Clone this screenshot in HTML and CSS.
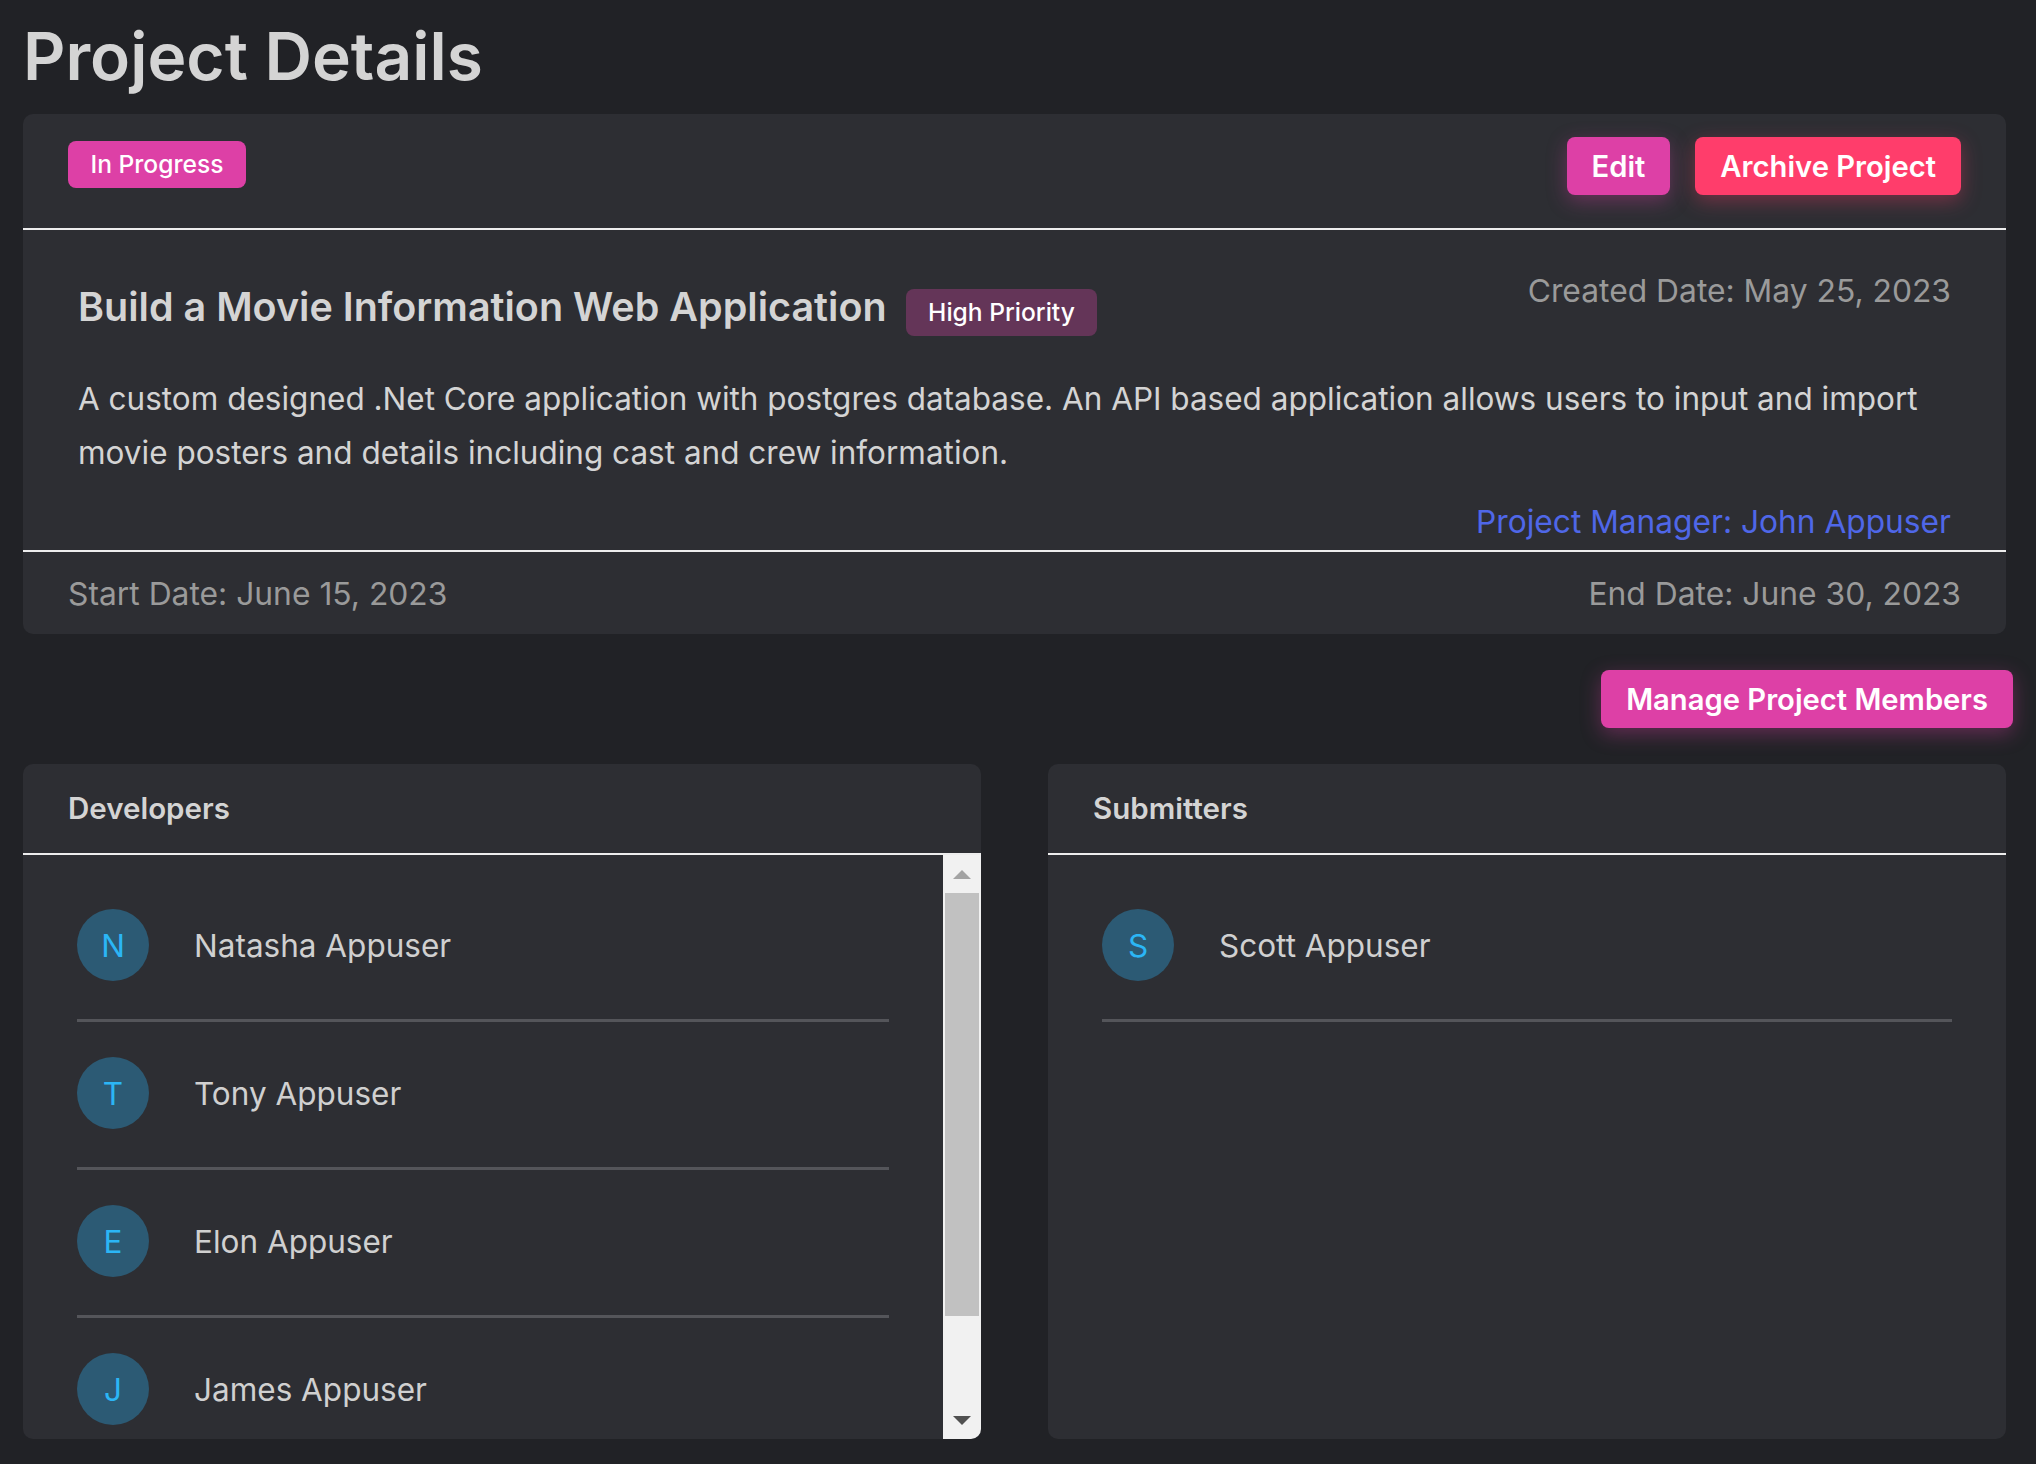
FILE: index.html
```html
<!DOCTYPE html>
<html lang="en">
<head>
  <meta charset="UTF-8">
  <meta name="viewport" content="width=device-width, initial-scale=1.0">
  <title>Project Details</title>
  <link rel="stylesheet" href="styles.css">
</head>
<body>
  <h1 class="page-title">Project Details</h1>

  <section class="card project-card">
    <div class="project-head">
      <span class="badge badge-status">In Progress</span>
      <div class="head-actions">
        <button class="btn btn-pink" type="button">Edit</button>
        <button class="btn btn-red" type="button">Archive Project</button>
      </div>
    </div>
    <div class="project-body">
      <div class="title-row">
        <div class="title-left">
          <h2 class="project-name">Build a Movie Information Web Application</h2>
          <span class="badge badge-priority">High Priority</span>
        </div>
        <span class="muted">Created Date: May 25, 2023</span>
      </div>
      <p class="description">A custom designed .Net Core application with postgres database. An API based application allows users to input and import movie posters and details including cast and crew information.</p>
      <div class="manager">Project Manager: John Appuser</div>
    </div>
    <div class="project-foot muted">
      <span>Start Date: June 15, 2023</span>
      <span>End Date: June 30, 2023</span>
    </div>
  </section>

  <div class="members-bar">
    <button class="btn btn-pink" type="button">Manage Project Members</button>
  </div>

  <div class="member-grid">
    <section class="card member-card">
      <h3 class="member-head">Developers</h3>
      <div class="member-scroll">
        <ul class="member-list">
          <li class="member"><span class="avatar">N</span><span class="member-name">Natasha Appuser</span></li>
          <li class="member"><span class="avatar">T</span><span class="member-name">Tony Appuser</span></li>
          <li class="member"><span class="avatar">E</span><span class="member-name">Elon Appuser</span></li>
          <li class="member"><span class="avatar">J</span><span class="member-name">James Appuser</span></li>
        </ul>
        <div class="scrollbar">
          <span class="scroll-btn"><i class="arrow-up"></i></span>
          <div class="scroll-track"><div class="scroll-thumb"></div></div>
          <span class="scroll-btn"><i class="arrow-down"></i></span>
        </div>
      </div>
    </section>
    <section class="card member-card">
      <h3 class="member-head">Submitters</h3>
      <div class="member-scroll">
        <ul class="member-list">
          <li class="member"><span class="avatar">S</span><span class="member-name">Scott Appuser</span></li>
        </ul>
      </div>
    </section>
  </div>
</body>
</html>
```

FILE: styles.css
```css
* {
  box-sizing: border-box;
}
body {
  margin: 0;
  padding: 0 23px 25px 23px;
  background: #212226;
  color: #d4d4d4;
  font-family: Inter, "Noto Sans", sans-serif;
  font-size: 31.5px;
}
.page-title {
  margin: 0;
  height: 114px;
  padding-top: 20px;
  font-size: 65.8px;
  line-height: 72px;
  font-weight: 600;
}
.card {
  background: #2d2e33;
  border-radius: 10px;
}
.project-card {
  margin-right: 7px;
}
.project-head {
  display: flex;
  justify-content: space-between;
  align-items: flex-start;
  height: 116px;
  padding: 23px 45px 0;
  border-bottom: 2px solid #ededed;
}
.badge {
  display: inline-block;
  height: 47px;
  padding: 0 22.5px;
  border-radius: 8px;
  color: #fff;
  font-size: 24.6px;
  font-weight: 500;
  line-height: 47px;
  white-space: nowrap;
}
.badge-status {
  margin-top: 4px;
  background: #dd40a6;
}
.badge-priority {
  margin-top: 18px;
  background: #643558;
}
.head-actions {
  display: flex;
  gap: 25px;
}
.btn {
  height: 58px;
  padding: 0 25px;
  border: none;
  border-radius: 8px;
  color: #fff;
  font-family: inherit;
  font-size: 29.2px;
  font-weight: 600;
}
.btn-pink {
  background: #dd40a6;
  box-shadow: 0 6px 20px rgba(221, 64, 166, 0.35);
}
.btn-red {
  background: #ff3d6b;
  box-shadow: 0 6px 20px rgba(255, 61, 107, 0.35);
}
.project-body {
  height: 322px;
  padding: 41px 55px 0;
  border-bottom: 2px solid #ededed;
}
.title-row {
  display: flex;
  justify-content: space-between;
  align-items: flex-start;
}
.title-left {
  display: flex;
  align-items: flex-start;
  gap: 19px;
}
.project-name {
  margin: 8px 0 0;
  font-size: 39.5px;
  line-height: 56px;
  font-weight: 600;
}
.muted {
  color: #9a9a9a;
  font-size: 31.8px;
}
.description {
  margin: 36px 0 0;
  line-height: 53.5px;
}
.manager {
  margin-top: 18px;
  color: #4f67e8;
  font-size: 31.7px;
  text-align: right;
  line-height: 50px;
}
.project-foot {
  display: flex;
  justify-content: space-between;
  align-items: center;
  height: 82px;
  padding: 0 45px;
}
.members-bar {
  display: flex;
  justify-content: flex-end;
  height: 130px;
  padding-top: 36px;
}
.member-grid {
  display: grid;
  grid-template-columns: 958px 958px;
  gap: 67px;
}
.member-card {
  height: 675px;
  overflow: hidden;
}
.member-head {
  height: 91px;
  margin: 0;
  padding: 0 45px;
  border-bottom: 2px solid #ededed;
  font-size: 29.5px;
  font-weight: 600;
  line-height: 89px;
}
.member-scroll {
  display: flex;
  height: 584px;
}
.member-list {
  flex: 1;
  min-width: 0;
  overflow: hidden;
  margin: 0;
  padding: 19px 54px 0;
  list-style: none;
}
.member {
  display: flex;
  align-items: center;
  gap: 45px;
  height: 148px;
  padding: 35px 0 38px;
  border-bottom: 3px solid #54555a;
}
.avatar {
  display: flex;
  justify-content: center;
  align-items: center;
  flex-shrink: 0;
  width: 72px;
  height: 72px;
  border-radius: 50%;
  background: #2c5a74;
  color: #2bb6f6;
}
.member-name {
  color: #d0d0d0;
}
/* native bar doesn't show up in the screenshot, so it is drawn by hand */
.scrollbar {
  display: flex;
  flex-direction: column;
  flex-shrink: 0;
  width: 38px;
  background: #f1f1f1;
}
.scroll-btn {
  display: flex;
  justify-content: center;
  align-items: center;
  flex-shrink: 0;
  height: 38px;
}
.arrow-up {
  border: 9px solid transparent;
  border-top: 0;
  border-bottom-color: #a3a3a3;
}
.arrow-down {
  border: 9px solid transparent;
  border-bottom: 0;
  border-top-color: #505050;
}
.scroll-track {
  flex: 1;
  padding: 0 2px;
}
.scroll-thumb {
  height: 423px;
  background: #c1c1c1;
}
```
